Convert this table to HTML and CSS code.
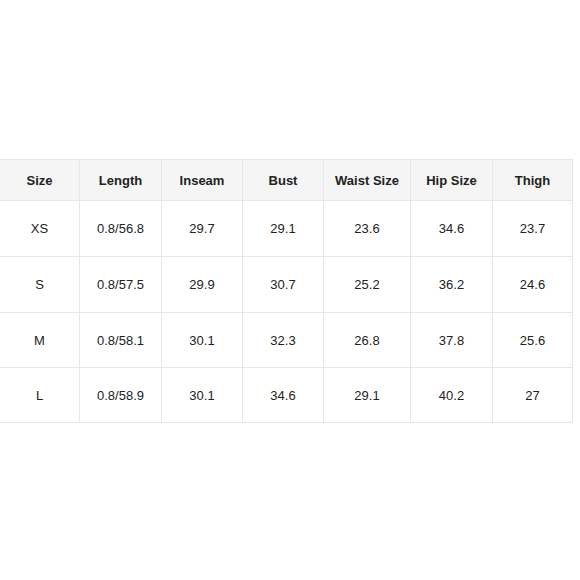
FILE: index.html
```html
<!DOCTYPE html>
<html>
<head>
<meta charset="utf-8">
<link rel="stylesheet" href="styles.css">
</head>
<body>
<div class="page">
  <div class="size-table">
    <div class="cell head">Size</div>
    <div class="cell head">Length</div>
    <div class="cell head">Inseam</div>
    <div class="cell head">Bust</div>
    <div class="cell head">Waist Size</div>
    <div class="cell head">Hip Size</div>
    <div class="cell head">Thigh</div>

    <div class="cell">XS</div>
    <div class="cell">0.8/56.8</div>
    <div class="cell">29.7</div>
    <div class="cell">29.1</div>
    <div class="cell">23.6</div>
    <div class="cell">34.6</div>
    <div class="cell">23.7</div>

    <div class="cell">S</div>
    <div class="cell">0.8/57.5</div>
    <div class="cell">29.9</div>
    <div class="cell">30.7</div>
    <div class="cell">25.2</div>
    <div class="cell">36.2</div>
    <div class="cell">24.6</div>

    <div class="cell">M</div>
    <div class="cell">0.8/58.1</div>
    <div class="cell">30.1</div>
    <div class="cell">32.3</div>
    <div class="cell">26.8</div>
    <div class="cell">37.8</div>
    <div class="cell">25.6</div>

    <div class="cell">L</div>
    <div class="cell">0.8/58.9</div>
    <div class="cell">30.1</div>
    <div class="cell">34.6</div>
    <div class="cell">29.1</div>
    <div class="cell">40.2</div>
    <div class="cell">27</div>
  </div>
</div>
</body>
</html>
```
FILE: styles.css
```css
html, body {
  margin: 0;
  padding: 0;
  background: #ffffff;
}
body {
  font-family: "Liberation Sans", Arial, sans-serif;
  color: #222222;
  overflow: hidden;
}
.page {
  width: 580px;
  height: 580px;
  padding-top: 159px;
  box-sizing: border-box;
}
.size-table {
  display: grid;
  grid-template-columns: 79px 81px 80px 80px 86px 81px 79px;
  grid-template-rows: 40px 55px 55px 54px 54px;
  gap: 1px;
  padding: 1px;
  background: #e6e6e6;
  width: max-content;
  margin-left: -1px;
}
.cell {
  background: #ffffff;
  display: flex;
  align-items: center;
  justify-content: center;
  font-size: 13px;
}
.cell.head {
  background: #f5f5f5;
  font-weight: bold;
}
```
